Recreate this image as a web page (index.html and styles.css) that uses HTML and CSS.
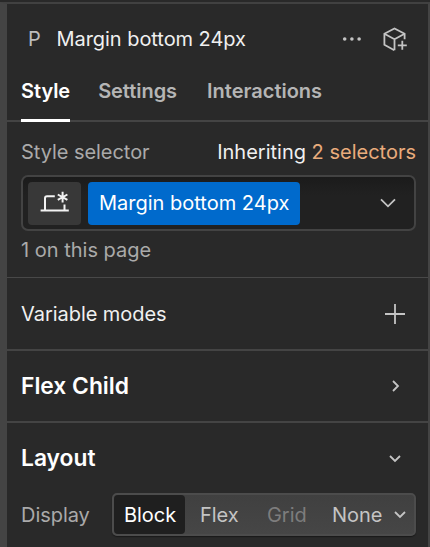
FILE: index.html
```
<!DOCTYPE html>
<html lang="en">
<head>
<meta charset="utf-8">
<title>Style panel</title>
<link rel="stylesheet" href="styles.css">
</head>
<body>
<main class="panel">
  <header class="header">
    <div class="element">
      <span class="tag">P</span>
      <span class="name">Margin bottom 24px</span>
      <svg class="dots" width="20" height="6" viewBox="0 0 20 6"><circle cx="2.7" cy="3" r="1.8"/><circle cx="9.9" cy="3" r="1.8"/><circle cx="17.1" cy="3" r="1.8"/></svg>
      <svg class="icon cube" width="24" height="25" viewBox="0 0 24 25"><path d="M11.3 23.2 1.4 17.8V6.8L11.5 1.5 21.6 6.8V12.2M1.4 6.8 11.5 12.3 21.6 6.8M11.5 12.3V23.2M19.3 13.8V22.8M14.8 18.3H23.8"/></svg>
    </div>
    <nav class="tabs">
      <span class="tab active">Style</span>
      <span class="tab settings">Settings</span>
      <span class="tab interactions">Interactions</span>
    </nav>
  </header>
  <section class="selector">
    <div class="row">
      <span class="muted label">Style selector</span>
      <span class="inherit">Inheriting <span class="accent">2 selectors</span></span>
    </div>
    <div class="field">
      <span class="state"><svg class="icon state-icon" width="30" height="24" viewBox="0 0 30 24"><path d="M.6 19.5H28.8M5 19V7.2Q5 5.2 7 5.2H14.8M24.5 13.5V19M22.6 .8V11.6M17.8 3.5 27.4 8.9M27.4 3.5 17.8 8.9"/></svg></span>
      <span class="chip"><span class="chip-text">Margin bottom 24px</span></span>
      <svg class="icon" width="18" height="12" viewBox="0 0 18 12"><path d="M2 2.3 9 9.3 16 2.3"/></svg>
    </div>
    <div class="muted count">1 on this page</div>
  </section>
  <section class="bar variables">
    <span class="modes">Variable modes</span>
    <svg class="icon" width="20" height="20" viewBox="0 0 20 20"><path d="M10 0V20M0 10H20"/></svg>
  </section>
  <section class="bar">
    <h2 class="flex-title">Flex Child</h2>
    <svg class="icon arrow" width="10" height="14" viewBox="0 0 10 14"><path d="M2 2 7 7 2 12"/></svg>
  </section>
  <section class="layout">
    <div class="layout-head">
      <h2 class="layout-title">Layout</h2>
      <svg class="icon down" width="14" height="9" viewBox="0 0 14 9"><path d="M2 2 7 7 12 2"/></svg>
    </div>
    <div class="display-row">
      <span class="muted display">Display</span>
      <div class="segments">
        <span class="seg block">Block</span>
        <span class="seg flex">Flex</span>
        <span class="seg grid">Grid</span>
        <span class="seg none">None</span>
        <svg class="icon" width="14" height="9" viewBox="0 0 14 9"><path d="M2 2 7 7 12 2"/></svg>
      </div>
    </div>
  </section>
</main>
</body>
</html>
```
FILE: styles.css
```
* { box-sizing: border-box; }
body {
  margin: 0;
  height: 547px;
  padding-top: 2px;
  overflow: hidden;
  background: #292929;
  color: #f0f0f0;
  font: 400 20px/24px Inter, "Liberation Sans", sans-serif;
  letter-spacing: -0.05px;
  white-space: nowrap;
}
.panel {
  height: 545px;
  border-top: 2px solid #414141;
  border-left: 7px solid #444;
  border-right: 2px solid #444;
}
.icon { display: block; flex: none; fill: none; stroke: #c4c4c4; stroke-width: 1.8; }
.muted { color: #aaa; }
h2 { margin: 0; font-size: 22.8px; line-height: 28px; font-weight: 600; letter-spacing: 0; color: #fff; }

.header { height: 118px; border-bottom: 2px solid #444; }
.element { display: flex; align-items: center; height: 70px; padding: 0 21px 0 21px; }
.tag { width: 28.5px; color: #bdbdbd; font-size: 20px; }
.dots { margin-left: auto; margin-right: 21px; fill: #c4c4c4; }
.tabs { display: flex; height: 48px; padding-left: 14px; }
.tab { height: 48px; padding-top: 5px; font-weight: 600; color: #b5b5b5; }
.tab.active { margin-right: 28px; color: #fff; border-bottom: 3px solid #fff; }
.settings { margin-right: 30px; }
.interactions { letter-spacing: 0; }

.selector { height: 156px; padding: 18px 12px 0 14px; border-bottom: 1px solid #484848; }
.row { display: flex; justify-content: space-between; }
.inherit { letter-spacing: 0; }
.accent { color: #e9ac7c; }
.field {
  display: flex;
  align-items: center;
  height: 56px;
  margin-top: 11px;
  padding: 0 17px 0 5px;
  border: 2px solid #434343;
  border-radius: 7px;
  background: linear-gradient(#1b1b1b, #212121 35%);
}
.state { display: grid; place-items: center; width: 53px; height: 43px; border-radius: 4px; background: #383838; }
.state-icon { stroke: #f2f2f2; stroke-width: 2; }
.chip { display: flex; align-items: center; width: 212px; height: 43px; margin: 0 auto 0 7px; padding-left: 11px; border-radius: 4px; background: #006acc; color: #fff; letter-spacing: 0; }
.count { margin-top: 7px; letter-spacing: 0; }

.bar { display: flex; align-items: center; justify-content: space-between; height: 72px; padding: 0 23px 0 14px; border-bottom: 2px solid #444; }
.variables { height: 73px; padding-top: 1px; }
.arrow { margin-right: 4px; }
.layout-head { display: flex; align-items: center; justify-content: space-between; height: 70px; padding: 0 26px 0 14px; }
.display-row { display: flex; align-items: center; padding: 0 12px 0 14px; }
.display { width: 91px; }
.segments {
  display: flex;
  align-items: center;
  width: 304px;
  height: 43px;
  border: 2px solid #4c4c4c;
  border-radius: 5px;
  background: linear-gradient(#404040, #464646);
  box-shadow: 0 1px 1px #191919;
  color: #c4c4c4;
}
.block { width: 71px; height: 39px; padding: 8px 0 0 10px; border-radius: 4px; background: #1f1f1f; color: #fff; }
.flex { margin-left: 15px; width: 67px; }
.grid { width: 65px; color: #7d7d7d; }
.none { width: 61px; }
```
